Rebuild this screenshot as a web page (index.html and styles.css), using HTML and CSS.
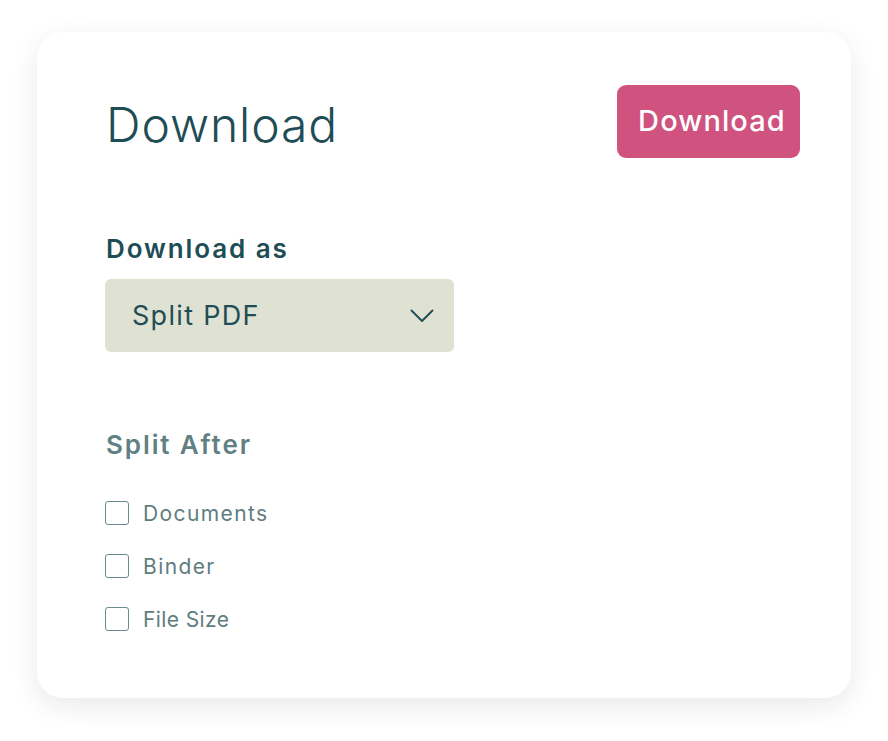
FILE: index.html
```html
<!DOCTYPE html>
<html>
<head>
<meta charset="utf-8">
<link rel="stylesheet" href="styles.css">
</head>
<body>
<div class="card">
  <div class="header">
    <h1 class="title">Download</h1>
    <button class="btn">Download</button>
  </div>
  <div class="label">Download as</div>
  <div class="select">
    <span class="select-text">Split PDF</span>
    <svg class="chev" width="24" height="14" viewBox="0 0 24 14"><path d="M1.5 1.5 L12 12 L22.5 1.5" fill="none" stroke="#22505a" stroke-width="2" stroke-linecap="round" stroke-linejoin="round"/></svg>
  </div>
  <div class="label muted">Split After</div>
  <div class="checks">
    <label class="check"><span class="box"></span><span class="check-text">Documents</span></label>
    <label class="check"><span class="box"></span><span class="check-text">Binder</span></label>
    <label class="check"><span class="box"></span><span class="check-text tight">File Size</span></label>
  </div>
</div>
</body>
</html>
```
FILE: styles.css
```css
* { box-sizing: border-box; }
html, body { margin: 0; padding: 0; background: #ffffff; }
body {
  font-family: Inter, "Noto Sans", sans-serif;
  color: #1f4d55;
  padding: 32px 37px 0 37px;
  min-height: 741px;
}
.card {
  width: 814px;
  height: 666px;
  background: #fff;
  border-radius: 26px;
  box-shadow: 0 8px 28px rgba(0, 0, 0, 0.09);
  padding: 53px 51px 0 69px;
}
.header {
  display: flex;
  justify-content: space-between;
  align-items: center;
  height: 73px;
}
.title {
  margin: 0;
  font-size: 48px;
  font-weight: 300;
  letter-spacing: 0.9px;
  color: #1f4d55;
  line-height: 1;
  margin-top: 6px;
}
.btn {
  width: 183px;
  height: 73px;
  border: none;
  border-radius: 9px;
  background: #cf527f;
  color: #fff;
  font-family: inherit;
  font-size: 29px;
  font-weight: 500;
  letter-spacing: 1.1px;
  padding: 0 0 2px 7px;
}
.label {
  margin-top: 75px;
  font-size: 26px;
  line-height: 32px;
  font-weight: 600;
  letter-spacing: 1.9px;
  color: #1f4d55;
}
.label.muted {
  margin-top: 77px;
  color: #628083;
}
.select {
  margin-top: 14px;
  margin-left: -1px;
  width: 349px;
  height: 73px;
  background: #dfe1d2;
  border-radius: 6px;
  display: flex;
  align-items: center;
  justify-content: space-between;
  padding: 0 20px 0 27px;
}
.select-text {
  font-size: 27px;
  letter-spacing: 1.3px;
  color: #1f4d55;
}
.chev { display: block; }
.checks {
  margin-top: 40px;
  margin-left: -1px;
  display: flex;
  flex-direction: column;
  gap: 29px;
}
.check {
  display: flex;
  align-items: center;
  height: 24px;
  gap: 14px;
}
.box {
  width: 24px;
  height: 24px;
  border: 1.6px solid #6c8b8e;
  border-radius: 3px;
  flex: none;
}
.check-text {
  font-size: 21px;
  color: #5f7d80;
  letter-spacing: 1.4px;
}
.check-text.tight {
  letter-spacing: 0.4px;
}
```
